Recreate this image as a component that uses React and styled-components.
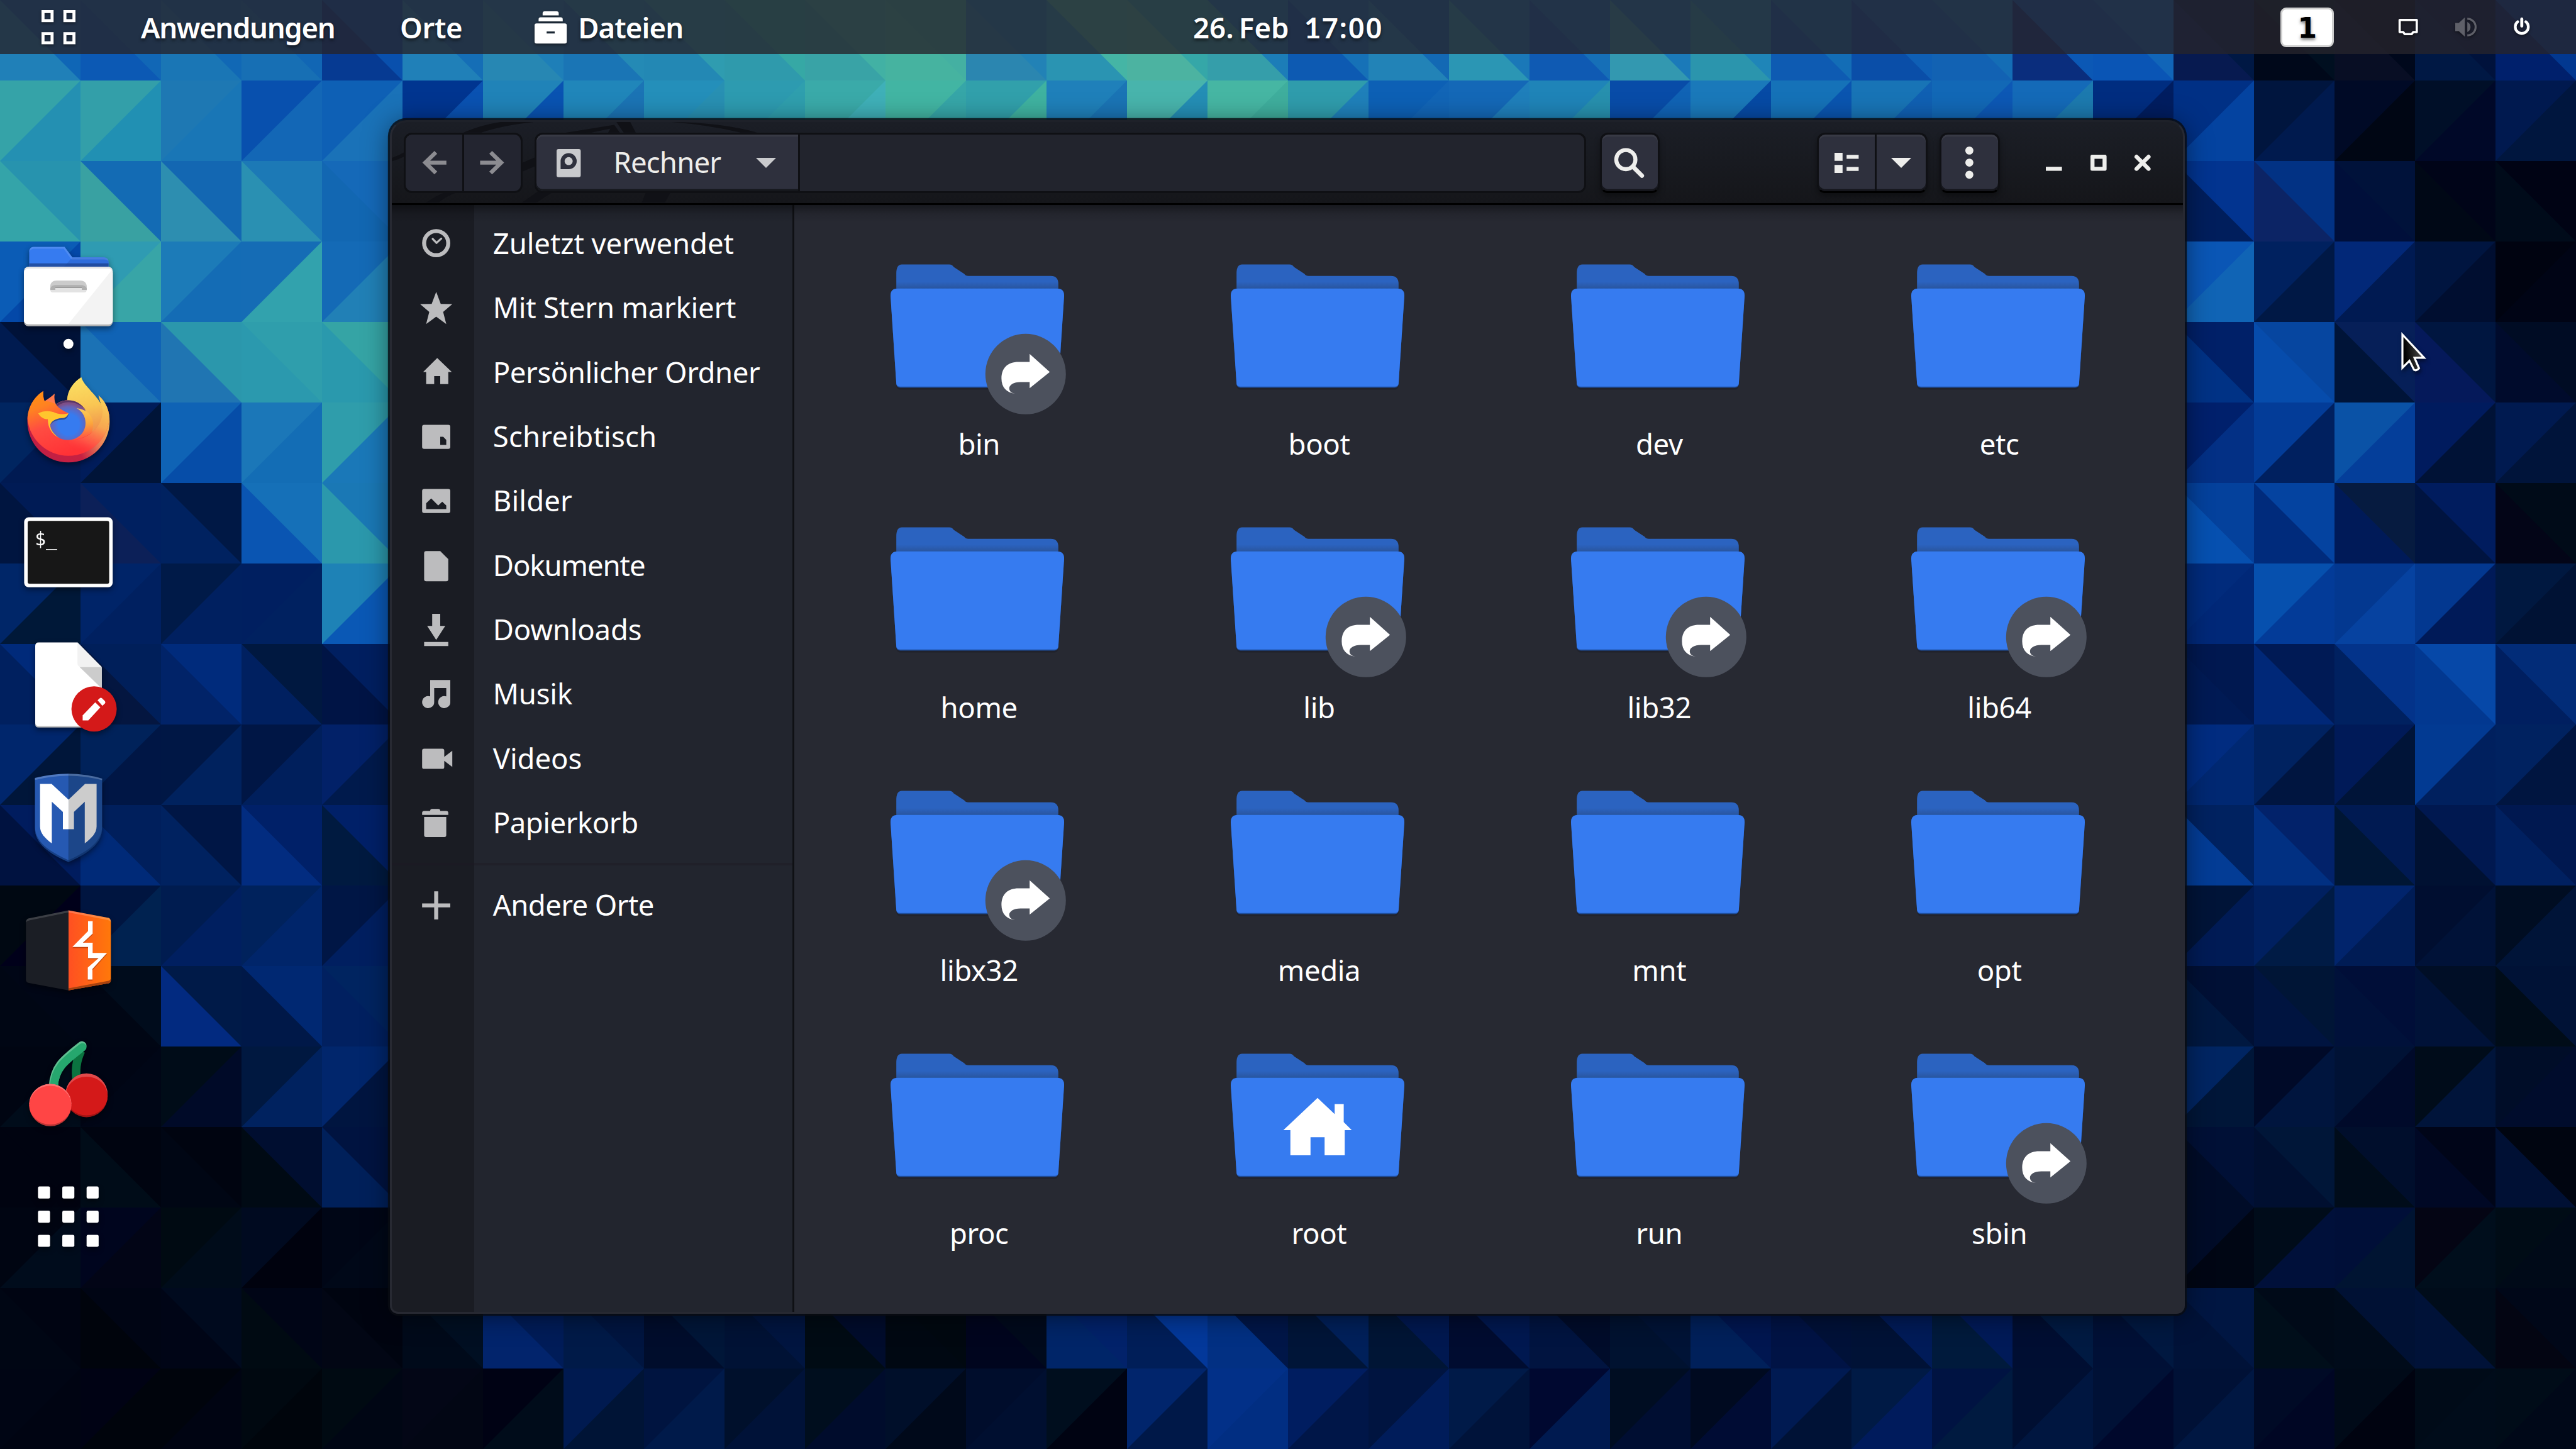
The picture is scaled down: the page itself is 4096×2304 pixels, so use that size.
import React from 'react';
import styled, { createGlobalStyle, css } from 'styled-components';

/* One design unit is 0.8 css pixels. */
const u = (n) => `${Math.round(n * 80) / 100}px`;

const Global = createGlobalStyle`
  html, body { margin: 0; padding: 0; background: #000612; }
  body { font-family: "Noto Sans", "Open Sans", sans-serif; overflow: hidden; }
  * { box-sizing: border-box; }
  svg { display: block; overflow: visible; flex: none; }
`;

/* ---------- wallpaper ---------- */

const ROWS = [
  '2080b8 0f66b6 0c59b4 1167b6 1a76b5 1168b5 176fb4 1166b4 063a92 0950ad 2080b8 156eb6 2787b3 1e7fb8 1a75b5 248ab5 2388b4 2f9cb0 2f9aac 36a8a5 39a3a6 42b1a4 46b3a0 44b0a2 2b86b0 2282b6 2a94b2 45b5a5 4cb3a1 35a7a8 359eaa 1c7db8 0d5ab2 1671b7 2283b7 1369b4 2b96b4 1a78b8 0f5ab3 166fb7 3398b0 1b7ab9 2b95ad 1f85b8 0e5bb2 136db6 0a4ea8 0f5fb5 1262b3 146db5 0a2d7d 0b58b5 0a55b5 1165b8 071a50 001844 00081a 000f20 080e24 00081c 001844 00123c 00206c 023890',
  '35a3a8 2490b2 339fa9 2190b3 1e78b3 1976b6 0850ae 1367b6 0e60b5 1a72b8 003590 0a52b2 2083b8 0953b2 2086ba 1b74b5 248fba 2890b3 2d9bb0 2f9fae 3aaaa9 3fb0b8 42b5a3 36a6a8 31a0ab 3fb2a0 1f80ba 1a74b5 48b4ac 248eb5 46b6a3 3fae9d 2f9cac 1f80ba 0d60b5 1265b6 1468b7 1f7fbb 1f84b8 2790ae 084ca8 1063b5 1a79ba 064aa5 1572b8 0a55b0 1874b6 1060b3 1268b6 0d58b5 146ab8 1c7aaf 002d80 001d60 003085 0443a0 00153e 001a4e 000a26 000614 000f28 000828 00194f 00163e',
  '34a4a9 2793ae 39a1a2 136bb4 2d8eb0 1367b2 2a90b2 1c79b6 1267b2 1569b8 | 001e5c 023490 0c2465 023284 000f3a 00123a 000816 000418 000b1a 000314',
  '0b5cb6 0448a8 2f9bb2 38a5a7 1c7bb8 146cb5 156cb5 32a2ad 146ab6 2180b6 | 0a56b5 1064b5 00215f 001845 022878 001a52 001540 000e30 000310 000415',
  '001b50 001238 1b72b5 1063b5 2075b2 2b97ac 2b99ae 2f9eac 2a99ad 35a4a5 | 003285 002068 064cac 0646a0 001438 061f58 05195a 001640 000b2c 000c24',
  '002560 001a52 001c5a 001438 0f63b5 064da8 1b77b8 136db5 2f9dab 1a78b8 | 00206c 033085 033c98 00205f 0a52a6 043e9a 001b5e 001236 001a50 00143a',
  '001540 001b55 0c2058 002060 002260 001845 0a55b2 1570b8 2b98ac 1a78b5 | 0650b0 04419c 002b7c 0443a0 001a58 061b40 001440 001c5e 030517 000b18',
  '002668 001838 002468 002060 001a48 002060 001f60 002160 1e82b6 0a58b5 | 012b7c 002878 0650ae 033b98 033890 0642a0 033890 001a58 001840 001234',
  '00205f 002a7a 041640 001f5a 012368 002b7c 002060 001840 001445 001f60 | 001a54 001850 002878 001a55 002160 03338a 023890 0648a8 001f60 022c78',
  '00266c 00163a 00225a 001645 001745 00225e 001645 001f5c 022168 001a4c | 012c80 002872 002260 001540 001a58 001438 023a92 00205e 002260 001540',
  '001240 001c5e 002a78 001f5c 002260 001645 022c80 002068 001a40 002068 | 033c95 002260 013082 02226a 001634 001a52 001132 001850 002060 001850',
  '000812 00001a 001540 002250 001c50 001f60 00225c 00256a 001645 001f60 | 001438 001b55 002060 001b45 01246c 001c55 000e30 001238 000d22 001438',
  '000614 000616 000614 000c1c 022a80 001a48 001848 002872 012060 002460 | 001840 001035 001440 001536 00113a 000e38 001238 000e26 000c18 001236',
  '000512 000c1a 000514 000616 000c18 000a28 001840 00225f 01266c 001540 | 002562 001638 000a28 00153e 001235 000a2a 000c1a 00143a 000d28 000c2c',
  '000310 000310 000c18 000410 000614 000410 000a14 000e30 00205a 001340 | 000c28 001036 000f30 001638 000c1a 000e2c 000825 000518 001034 000510',
  '000512 000c1c 00051e 020516 000a12 000c1a 000a20 00020e 000616 000818 | 000c28 000614 000c1a 00103a 000f38 001432 040514 000e1c 000c16 000a18',
  '000614 000412 00040c 000514 000516 000a1e 000a12 000516 020614 000410 000a1a 000f22 02246c 001c58 001a48 001540 000d2c 001638 001235 001540 000b14 000c2c 000812 000810 00051e 000a1c 002568 02226a 001e58 03389a 023083 001648 001538 00205a 001535 001850 000c30 001850 011440 000c2a 001230 001336 00205a 001650 001345 001138 001236 001b58 001a3c 001a58 000e32 001a42 001036 001840 001238 001642 000e1a 000a18 000b1a 001134 001238 000c1a 030512 000718',
  '000514 000412 000214 00040c 00040c 000412 000810 00050c 000a12 000614 030616 020614 000214 000c1a 001a50 001436 001440 001a4a 00102c 001238 000e1e 000c2c 000f2a 00091a 000d2c 000f30 000e1e 000312 01256c 001848 023088 012e82 001d60 001648 001440 001c5a 001a48 00133a 000830 001a50 000d22 000e32 000a20 000c34 001a52 001236 001a45 001b5c 001342 001a40 000f32 001640 001136 00082c 001136 001742 000a26 000624 000a18 000310 000b18 000c1a 000c18 000818',
];

const rowCells = (row) => {
  const [a, b] = row.split(' | ').map((s) => s.split(' '));
  const pair = (list, offset) =>
    list.reduce((out, c, i) => (i % 2 ? out : [...out, { col: offset + i / 2, l: c, r: list[i + 1] }]), []);
  return b ? [...pair(a, 0), ...pair(b, 27)] : pair(a, 0);
};

const WallpaperSvg = styled.svg`
  position: absolute;
  inset: 0;
  width: 4096px;
  height: 2304px;
`;

const Wallpaper = () => (
  <WallpaperSvg viewBox="0 0 32 18" preserveAspectRatio="none">
    {ROWS.map((row, y) =>
      rowCells(row).map(({ col: x, l, r }) => (
        <g key={`${x}-${y}`}>
          <rect x={x} y={y} width="1" height="1" fill={`#${r}`} shapeRendering="crispEdges" />
          <path
            d={y % 2 ? `M${x} ${y}h1L${x} ${y + 1}z` : `M${x} ${y}v1h1z`}
            fill={`#${l}`}
          />
        </g>
      ))
    )}
  </WallpaperSvg>
);

/* ---------- shell ---------- */

const Desktop = styled.div`
  position: relative;
  width: 4096px;
  height: 2304px;
  overflow: hidden;
  display: flex;
  flex-direction: column;
`;

const TopBar = styled.header`
  position: relative;
  flex: none;
  height: ${u(108)};
  display: grid;
  grid-template-columns: 1fr auto 1fr;
  align-items: center;
  background: rgba(37, 36, 44, 0.8);
  color: #fff;
  font-size: 45.5px;
  font-weight: 600;
  white-space: nowrap;
  text-shadow: 0 3px 5px rgba(0, 0, 0, 0.55);
`;

const BarMenus = styled.nav`
  display: grid;
  grid-template-columns: ${u(198)} ${u(515)} ${u(267)} ${u(87)} auto;
  align-items: center;
  justify-content: start;
  padding-left: ${u(82)};
`;

const BarLabel = styled.span`
  letter-spacing: ${(p) => p.$track || 0}px;
  word-spacing: ${(p) => p.$words || 0}px;
`;

const Clock = styled.div`
  display: flex;
  gap: 24px;
  align-items: baseline;
`;

const LatinOne = styled.span`
  font-family: Lato, sans-serif;
  font-weight: 700;
  font-size: 46px;
`;

const Status = styled.div`
  display: flex;
  justify-content: flex-end;
  align-items: center;
  padding-right: ${u(92)};
`;

const Workspace = styled.div`
  width: ${u(106)};
  height: ${u(79)};
  margin-right: ${u(129)};
  border: 3.2px solid #cfcfcf;
  border-radius: 9px;
  background: #fff;
  color: #000;
  display: flex;
  align-items: center;
  justify-content: center;
  padding-top: 3px;
  font: 700 44px/46px "DejaVu Sans", sans-serif;
`;

const Tray = styled.svg`
  width: ${(p) => u(p.$w)};
  height: ${u(40)};
  margin-right: ${(p) => u(p.$after || 0)};
  filter: drop-shadow(0 2px 2px rgba(0, 0, 0, 0.5));
`;

const BarIcon = styled.svg`
  width: ${(p) => u(p.$w)};
  height: ${(p) => u(p.$h)};
  filter: drop-shadow(0 2px 2px rgba(0, 0, 0, 0.45));
`;

const Dock = styled.aside`
  position: relative;
  width: ${u(272)};
  padding-top: ${u(330)};
  display: flex;
  flex-direction: column;
`;

const DockIcon = styled.svg`
  width: ${u(272)};
  height: ${u(264)};
  filter: drop-shadow(0 4px 5px rgba(0, 0, 0, 0.45));
`;

/* ---------- window ---------- */

const Window = styled.section`
  position: absolute;
  left: ${u(775)};
  top: ${u(239)};
  width: ${u(3568)};
  height: ${u(2372)};
  display: flex;
  flex-direction: column;
  border: 3.2px solid #272932;
  border-top-color: #1e2129;
  border-radius: 26px 26px 13px 13px;
  background: #272932;
  box-shadow: 0 0 0 3.2px rgba(9, 12, 18, 0.82), 0 4px 40px rgba(0, 0, 0, 0.5);
  overflow: hidden;
`;

const HeaderBar = styled.div`
  position: relative;
  flex: none;
  height: ${u(165)};
  display: flex;
  align-items: center;
  padding: ${u(1)} 0 0 ${u(24)};
  border-bottom: 3.2px solid #000;
  background: linear-gradient(#1b1e26, #15161a);
`;

const HeaderArt = styled.svg`
  position: absolute;
  left: 0;
  top: 0;
  width: 681px;
  height: 128px;
`;

const flatBox = css`
  border: 3.2px solid #0f1014;
  border-radius: 13px;
`;

const NavGroup = styled.div`
  position: relative;
  display: flex;
  width: ${u(236)};
  height: ${u(120)};
  margin-right: ${u(24)};
  background: #232530;
  overflow: hidden;
  ${flatBox}
`;

const NavButton = styled.button`
  flex: 1;
  border: 0;
  padding: 0;
  background: none;
  display: flex;
  align-items: center;
  justify-content: center;
  & + & { border-left: 3.2px solid #0f1014; }
`;

const PathBar = styled.div`
  position: relative;
  width: ${u(2090)};
  height: ${u(120)};
  margin-right: ${u(27)};
  display: flex;
  background: #22242d;
  overflow: hidden;
  ${flatBox}
`;

const PathButton = styled.button`
  width: ${u(524)};
  border: 0;
  border-right: 3.2px solid #0f1014;
  border-radius: 10px 0 0 10px;
  padding: 0 ${u(44)} 0 ${u(40)};
  background: #2e303d;
  box-shadow: inset 0 3.2px #383a45, inset 0 -3.2px #15171c;
  color: #eeeeec;
  font: 400 45.5px/1 "Noto Sans", sans-serif;
  letter-spacing: -0.8px;
  display: flex;
  align-items: center;
  justify-content: space-between;
`;

const PathText = styled.span`
  padding: 0 4px 2px 0;
`;

const RaisedGroup = styled.div`
  position: relative;
  display: flex;
  height: ${u(120)};
  width: ${(p) => u(p.$w)};
  margin-right: ${(p) => u(p.$after)};
  border: 3.2px solid #0f1014;
  border-bottom-color: #000;
  border-radius: 13px;
  background: #2e303d;
  box-shadow: inset 0 3.2px #383a45, inset 0 -3.2px #15161c, 0 5px 10px rgba(0, 0, 0, 0.35);
`;

const RaisedButton = styled.button`
  width: ${(p) => (p.$w ? u(p.$w) : '100%')};
  border: 0;
  padding: 0;
  background: none;
  display: flex;
  align-items: center;
  justify-content: center;
  & + & { border-left: 3.2px solid #0f1014; }
`;

const WindowButton = styled.button`
  position: relative;
  border: 0;
  padding: 0;
  margin-right: ${u(56)};
  background: none;
`;

const Glyph = styled.svg`
  width: ${(p) => u(p.$w || 64)};
  height: ${(p) => u(p.$h || p.$w || 64)};
  fill: ${(p) => p.$c || '#eeeeec'};
`;

const Body = styled.div`
  position: relative;
  flex: 1;
  display: flex;
  &::before {
    content: '';
    position: absolute;
    inset: 0 0 auto 0;
    height: 28px;
    background: linear-gradient(rgba(0, 0, 0, 0.4), rgba(0, 0, 0, 0.1) 50%, transparent);
  }
`;

const Sidebar = styled.nav`
  width: ${u(800)};
  flex: none;
  padding-top: ${u(12)};
  border-right: 3.2px solid #0f1014;
  background: linear-gradient(90deg, #1a1c23 ${u(164)}, #22252e ${u(164)});
`;

const Place = styled.div`
  height: ${u(128)};
  padding-left: ${u(56)};
  display: flex;
  align-items: center;
  gap: ${u(81)};
  color: #fff;
`;

const PlaceName = styled.span`
  font-size: 45.5px;
  line-height: 1;
  padding-bottom: 1px;
  letter-spacing: ${(p) => p.$track}px;
  white-space: nowrap;
`;

const Rule = styled.hr`
  height: 3.2px;
  border: 0;
  margin: ${u(16)} 0;
  background: rgba(30, 24, 34, 0.4);
`;

const FileGrid = styled.main`
  flex: 1;
  padding: ${u(110)} 0 0 ${u(26)};
  display: grid;
  grid-template-columns: repeat(4, ${u(676)});
  grid-auto-rows: ${u(522.7)};
`;

const FileItem = styled.div`
  display: flex;
  flex-direction: column;
  align-items: center;
  gap: ${u(14)};
  color: #fff;
`;

const FileName = styled.span`
  font-size: 45.5px;
  line-height: ${u(80)};
  padding-left: 5px;
  letter-spacing: -0.4px;
`;

const FolderSvg = styled.svg`
  width: ${u(360)};
  height: ${u(310)};
`;

const Cursor = styled.svg`
  position: absolute;
  left: ${u(4765)};
  top: ${u(650)};
  width: ${u(72)};
  height: ${u(104)};
  filter: drop-shadow(2px 4px 3px rgba(0, 0, 0, 0.5));
`;

/* ---------- icons ---------- */

const icons = {
  recent: (
    <g fill="none" stroke="#bcbcbe">
      <circle cx="32" cy="32" r="24" strokeWidth="8" />
      <path d="M25 23.5L32.5 31.5L42 23" strokeWidth="4" strokeLinecap="round" strokeLinejoin="round" />
    </g>
  ),
  star: <path d="M32 0L41 24L64 24.5L45.8 40L52 64L32 49.5L12 64L18.2 40L0 24.5L23 24z" />,
  home: <path d="M34 4L63 32H56V56H40V40H28V56H12V32H6z" />,
  desktop: <path fillRule="evenodd" d="M8 8H56a4 4 0 0 1 4 4V52a4 4 0 0 1-4 4H8a4 4 0 0 1-4-4V12a4 4 0 0 1 4-4zM40 32V48H52V38L46 32z" />,
  picture: <path fillRule="evenodd" d="M8 8H56a4 4 0 0 1 4 4V52a4 4 0 0 1-4 4H8a4 4 0 0 1-4-4V12a4 4 0 0 1 4-4zM12 48H52V41L44 33.5L36 41L22 27L12 36.5z" />,
  doc: <path d="M12 4H40L56 20V60a4 4 0 0 1-4 4H12a4 4 0 0 1-4-4V8a4 4 0 0 1 4-4z" />,
  download: <path d="M24 0H40V24H50L32 52L14 24H24zM8 56H56V64H8z" />,
  music: <path d="M20 4H60V48a12 12 0 1 1-8-11.3V20H28V48a12 12 0 1 1-8-11.3z" />,
  video: <path d="M8 12H44a4 4 0 0 1 4 4V28L64 16V48L48 36V48a4 4 0 0 1-4 4H8a4 4 0 0 1-4-4V16a4 4 0 0 1 4-4z" />,
  trash: <path d="M24 4H36a4 4 0 0 1 4 4H52a4 4 0 0 1 4 4V16H4V12a4 4 0 0 1 4-4H20a4 4 0 0 1 4-4zM8 20H52V56a4 4 0 0 1-4 4H12a4 4 0 0 1-4-4z" />,
  plus: <path d="M28 4H36V28H60V36H36V60H28V36H4V28H28z" />,
};

const PLACES = [
  ['recent', 'Zuletzt verwendet', -0.1],
  ['star', 'Mit Stern markiert', -0.25],
  ['home', 'Persönlicher Ordner', -0.45],
  ['desktop', 'Schreibtisch', 0.2],
  ['picture', 'Bilder', 0.1],
  ['doc', 'Dokumente', -1.1],
  ['download', 'Downloads', -0.2],
  ['music', 'Musik', -0.2],
  ['video', 'Videos', -0.1],
  ['trash', 'Papierkorb', -0.5],
];

const FILES = [
  ['bin', 'link'], ['boot'], ['dev'], ['etc'],
  ['home'], ['lib', 'link'], ['lib32', 'link'], ['lib64', 'link'],
  ['libx32', 'link'], ['media'], ['mnt'], ['opt'],
  ['proc'], ['root', 'home'], ['run'], ['sbin', 'link'],
];

const Folder = ({ emblem }) => (
  <FolderSvg viewBox="0 0 360 310">
    <path d="M19 26Q19 8 30 8H124Q130 8 133 13L154 27Q157 31 162 31H326Q341 31 341 47V90H19z" fill="url(#folderBack)" />
    <path d="M19 246H341Q341 257 333 257H27Q19 257 19 246z" fill="#1e2029" opacity="0.7" />
    <path d="M22 56H338Q353 56 352.5 71L341 246Q340.500 253 333 253H27Q19.500 253 19 246L7.500 71Q7 56 22 56z" fill="#1f4f9e" />
    <path d="M22 56H338Q353 56 352.500 71L341 245Q340.500 251 333 251H27Q19.500 251 19 245L7.500 71Q7 56 22 56z" fill="#367bf0" />
    {emblem === 'link' && (
      <g>
        <circle cx="276" cy="226" r="80" fill="#4c515d" />
        <path d="M284 186L324 222L284 254V242H266C252 242 243 248 243.500 255C244 261 249 264 255 265C238 263 228 252 228 235C228 214 240 202 262 202H284z" fill="#fff" />
      </g>
    )}
    {emblem === 'home' && (
      <path d="M180 96L214 128V108H232V144L248 160H234V210H194V174H166V210H126V160H112z" fill="#fff" />
    )}
  </FolderSvg>
);

const DefsSvg = styled.svg`
  position: absolute;
  width: 0;
  height: 0;
`;

const Defs = () => (
  <DefsSvg>
    <defs>
      <linearGradient id="folderBack" x1="0" y1="0" x2="0" y2="1">
        <stop offset="0" stopColor="#2b63c0" />
        <stop offset="0.42" stopColor="#2b63c0" />
        <stop offset="0.6" stopColor="#29549c" />
      </linearGradient>
      <linearGradient id="burp" x1="0" x2="1">
        <stop offset="0" stopColor="#ff5022" />
        <stop offset="1" stopColor="#ff780a" />
      </linearGradient>
      <linearGradient id="foxBody" gradientUnits="userSpaceOnUse" x1="190" y1="930" x2="330" y2="1300">
        <stop offset="0" stopColor="#ff8f14" />
        <stop offset="0.2" stopColor="#ff8122" />
        <stop offset="0.5" stopColor="#ff4c42" />
        <stop offset="1" stopColor="#ff3236" />
      </linearGradient>
      <linearGradient id="foxRight" gradientUnits="userSpaceOnUse" x1="560" y1="980" x2="420" y2="1280">
        <stop offset="0" stopColor="#f9cf58" />
        <stop offset="0.45" stopColor="#f7a650" />
        <stop offset="0.8" stopColor="#ff5a48" stopOpacity="0.8" />
        <stop offset="1" stopColor="#ff4040" stopOpacity="0" />
      </linearGradient>
      <linearGradient id="foxTail" gradientUnits="userSpaceOnUse" x1="420" y1="840" x2="480" y2="1180">
        <stop offset="0" stopColor="#fae063" />
        <stop offset="0.5" stopColor="#f9c653" />
        <stop offset="1" stopColor="#ee8a4c" />
      </linearGradient>
      <linearGradient id="foxFlame" gradientUnits="userSpaceOnUse" x1="430" y1="1020" x2="440" y2="1210">
        <stop offset="0" stopColor="#fcd05a" />
        <stop offset="0.5" stopColor="#fba63c" />
        <stop offset="1" stopColor="#ff4f44" />
      </linearGradient>
      <radialGradient id="foxGlobe" gradientUnits="userSpaceOnUse" cx="350" cy="1120" r="125">
        <stop offset="0.5" stopColor="#367bf0" />
        <stop offset="0.85" stopColor="#6664b8" />
        <stop offset="1" stopColor="#7d4f88" />
      </radialGradient>
      <linearGradient id="foxBase" gradientUnits="userSpaceOnUse" x1="200" y1="1300" x2="590" y2="1100">
        <stop offset="0" stopColor="#c21f44" />
        <stop offset="0.45" stopColor="#c52142" />
        <stop offset="0.75" stopColor="#ec8058" />
        <stop offset="1" stopColor="#f8bd58" />
      </linearGradient>
      <linearGradient id="cursorFill" x1="0" y1="0.5" x2="1" y2="0.3">
        <stop offset="0.1" stopColor="#000" />
        <stop offset="1" stopColor="#555" />
      </linearGradient>
      <clipPath id="foxClip">
        <circle cx="348" cy="1060" r="246" />
      </clipPath>
    </defs>
  </DefsSvg>
);

const FOX_BODY =
  'M527 946C572 982 594 1042 594 1100C594 1236 484 1346 348 1346C212 1346 103 1236 103 1100C103 1020 140 958 198 920C197 945 199 965 206 981C226 970 246 955 265 937C261 960 264 982 273 1000C295 982 320 975 348 975L545 1012C543 990 537 968 527 946z';

const FilesIcon = () => (
  <DockIcon viewBox="0 0 272 264">
    <g transform="translate(20 32) scale(.33333)">
      <path d="M114 190V90Q116 64 140 63H325L372 126H560Q586 128 587 155V190z" fill="#367bf0" />
      <path d="M372 126H560Q586 128 587 155V190H314z" fill="#2f6ddb" />
      <path d="M114 90Q116 64 140 63H325L372 126H560Q586 128 587 150Q578 138 560 138H366L320 75H140Q120 78 114 95z" fill="#fff" opacity=".12" />
      <path d="M114 162H587V190H114z" fill="#1d418c" opacity=".75" />
      <rect x="83" y="182" width="529" height="355" rx="26" fill="#b3b3b3" />
      <rect x="83" y="182" width="529" height="343" rx="26" fill="#e8e8e8" />
      <rect x="83" y="194" width="529" height="331" rx="24" fill="#fff" />
      <path d="M606 203Q612 210 612 220V500Q612 525 586 525H347z" fill="#f3f3f3" />
      <path d="M240 320V300Q242 266 276 265H420Q454 266 457 300V320Q457 335 440 335H256Q240 335 240 320z" fill="#e3e3e3" />
      <path d="M240 320V296Q244 265 276 265H420Q452 265 457 296V320H428V308H270V320z" fill="#cbcbcb" />
      <path d="M240 320V310Q248 291 276 291H420Q448 291 457 310V320H428V304H270V320z" fill="#b0b0b0" />
      <path d="M270 303H428V309H270z" fill="#989898" />
    </g>
    <circle cx="136" cy="246" r="10" fill="#fff" />
  </DockIcon>
);

const FirefoxIcon = () => (
  <DockIcon viewBox="0 0 272 264">
    <g transform="translate(20 -232) scale(.33333)">
      <path d={FOX_BODY} fill="url(#foxBase)" />
      <g clipPath="url(#foxClip)">
        <path d={FOX_BODY} fill="url(#foxBody)" />
        <path d="M527 946C572 982 594 1042 594 1100C594 1236 484 1346 348 1346L350 1213C410 1213 460 1195 490 1166C540 1120 556 1060 545 1012z" fill="url(#foxRight)" />
      </g>
      <path d="M340 975C342 915 380 865 425 838C437 884 505 935 538 990C552 1016 552 1040 550 1060C545 1105 520 1140 488 1168L400 1100z" fill="url(#foxTail)" />
      <ellipse cx="346" cy="1094" rx="118" ry="119" fill="url(#foxGlobe)" />
      <path d="M273 1000C295 982 320 975 348 975C390 976 425 995 453 1035C420 1000 385 987 348 987C322 988 300 995 283 1010z" fill="#5b3566" />
      <path d="M397 1022C450 1028 495 1062 495 1115C495 1135 492 1155 488 1168C455 1195 400 1213 348 1213C410 1208 450 1165 450 1110C450 1072 430 1040 397 1022z" fill="url(#foxFlame)" />
      <path d="M206 981L273 1000C292 1028 322 1040 348 1052C345 1068 332 1078 320 1081C280 1082 245 1092 239 1124C240 1155 262 1185 292 1200L180 1150L160 1020z" fill="url(#foxBody)" />
      <path d="M206 981C226 970 246 955 265 937C261 960 264 982 273 1000C250 985 230 980 206 981z" fill="#ff7a4e" />
      <path d="M320 1081C332 1078 345 1068 348 1052C350 1072 335 1088 318 1091C280 1092 255 1100 239 1124C245 1092 280 1082 320 1081z" fill="#2b4f96" />
      <path d="M168 1053C200 1036 240 1036 270 1050C300 1061 330 1059 348 1052C342 1070 330 1080 315 1080C280 1081 248 1094 239 1122C240 1150 262 1180 292 1200C250 1178 225 1140 225 1088C200 1088 180 1075 168 1053z" fill="#ffc62e" />
    </g>
  </DockIcon>
);

const TerminalIcon = () => (
  <DockIcon viewBox="0 0 272 264">
    <rect x="48" y="62" width="176" height="139" rx="9" fill="#fff" />
    <rect x="55" y="69" width="162" height="125" rx="4" fill="#171717" />
    <text x="69" y="118" fill="#fff" fontFamily="DejaVu Sans Mono, monospace" fontSize="37">$_</text>
  </DockIcon>
);

const EditorIcon = () => (
  <DockIcon viewBox="0 0 272 264">
    <path d="M77 50H154L202 98V209Q202 216 195 216H77Q70 216 70 209V57Q70 50 77 50z" fill="#bdbdbd" />
    <path d="M77 47H154L202 95.500V206Q202 213 195 213H77Q70 213 70 206V54Q70 47 77 47z" fill="#fff" />
    <path d="M158 95.500H202V138z" fill="#ccc" />
    <path d="M154 47L202 95.500H161Q154 95 154 88z" fill="#f2f2f2" />
    <circle cx="187" cy="179" r="45" fill="#d41919" />
    <path d="M164.300 192L189.300 166L199.500 176L175.500 202H164.300z" fill="#fff" />
    <path d="M193.900 162L198 158Q200.500 156 203 158L208.500 163.500Q210.500 166 208.500 168L203.600 172.700z" fill="#fff" />
  </DockIcon>
);

const MetasploitIcon = () => (
  <DockIcon viewBox="0 0 272 264">
    <path d="M69.400 52.600Q102 44 136.200 44V219.800C100 203 69.400 185 69.400 151.800z" fill="#2659b2" />
    <path d="M203 53.600Q170 44 136.200 44V219.800C172 203 203 185 203 151.800z" fill="#1c4689" />
    <path d="M69.400 52.600Q102 44 136.200 44T203 53.600V57Q170 48 136.200 48T69.400 56.500z" fill="#fff" opacity=".2" />
    <path d="M69.400 151.800C69.400 185 100 203 136.200 219.800C172 203 203 185 203 151.800V148C203 181 172 199 136.200 216C100 199 69.400 181 69.400 148z" fill="#0a2a5e" opacity=".55" />
    <path d="M79.600 64.300H102.600L136.200 95.500V154.300H125V120L103 99.800V182.500C89 172 79.600 162 79.600 149z" fill="#fff" />
    <path d="M192 64.300H169L136.200 95.500V154.300H147V120L168.500 99.800V182.500C182 172 192 162 192 149z" fill="#ccc" />
  </DockIcon>
);

const BurpIcon = () => (
  <DockIcon viewBox="0 0 272 264">
    <path d="M136.200 52L56 68Q51.500 70 51.500 76V190Q51.500 194 56 196L136.200 211z" fill="#1b1e25" />
    <path d="M136.200 52L56 68Q51.500 70 51.500 76Q53 73 58 72L136.200 56z" fill="#fff" opacity=".15" />
    <path d="M136.200 52L216 67Q220.400 69 220.400 75V190Q220.400 195 216 197L136.200 211z" fill="url(#burp)" />
    <path d="M136.200 207L216 192Q220.400 190 220.400 186V191Q220.400 195 216 197L136.200 211z" fill="#a8420f" />
    <path d="M136.200 52L216 67Q220.400 69 220.400 75Q218 72 214 71L136.200 56z" fill="#fff" opacity=".2" />
    <path d="M175 75.500H184.200V100L164.800 118.500H184.200V139H212.800L183.700 171V191.500H174.500V168L196 149H175V127H143.900L175 95z" fill="#9c3208" opacity=".6" />
    <path d="M175 73.400H184.200V98L164.800 116.300H184.200V136.500H212.800L183.700 168.500V189.500H174.500V165.500L196 147H175V124.700H143.900L175 93z" fill="#fff" />
  </DockIcon>
);

const CherryIcon = () => (
  <DockIcon viewBox="0 0 272 264">
    <path d="M161 66Q147 95 153 128" fill="none" stroke="#0b7440" strokeWidth="17" />
    <path d="M106 138C108 100 124 86 163 56" fill="none" stroke="#5fbf91" strokeWidth="18" strokeLinecap="round" />
    <path d="M107 138C109 102 126 88 164 59" fill="none" stroke="#26a76e" strokeWidth="16" strokeLinecap="round" />
    <circle cx="172" cy="156" r="42" fill="#a01414" />
    <path d="M130 153a42 42 0 0 1 84 0z" fill="#e2494a" />
    <ellipse cx="172" cy="156" rx="42" ry="38.500" fill="#d41919" />
    <circle cx="100" cy="174" r="42" fill="#b93535" />
    <path d="M58 172a42 40 0 0 1 84 0z" fill="#ff7070" />
    <ellipse cx="100" cy="174" rx="42" ry="38.500" fill="#ff4545" />
  </DockIcon>
);

const AppsIcon = () => (
  <DockIcon viewBox="0 0 272 264" fill="#fff">
    {[0, 1, 2].map((r) =>
      [0, 1, 2].map((c) => <rect key={`${r}${c}`} x={75.5 + 48.3 * c} y={72 + 48 * r} width="24" height="24" rx="3" />)
    )}
  </DockIcon>
);

/* ---------- page ---------- */

export default function App() {
  return (
    <Desktop>
      <Global />
      <Defs />
      <Wallpaper />
      <TopBar>
        <BarMenus>
          <BarIcon $w={70} $h={68} viewBox="0 0 70 68" fill="none" stroke="#fff" strokeWidth="6">
            <rect x="3" y="3" width="18" height="18" />
            <rect x="46.500" y="3" width="18" height="18" />
            <rect x="3" y="47" width="18" height="18" />
            <rect x="46.500" y="47" width="18" height="18" />
          </BarIcon>
          <BarLabel $track={-1.4}>Anwendungen</BarLabel>
          <BarLabel $track={-0.3}>Orte</BarLabel>
          <BarIcon $w={64} $h={64} viewBox="0 0 64 64" fill="#fff">
            <path d="M20 0H44a4 4 0 0 1 4 4V8H16V4a4 4 0 0 1 4-4zM12 12H52a4 4 0 0 1 4 4V20H8V16a4 4 0 0 1 4-4z" />
            <path fillRule="evenodd" d="M4 24H60a4 4 0 0 1 4 4V60a4 4 0 0 1-4 4H4a4 4 0 0 1-4-4V28a4 4 0 0 1 4-4zM24 40V44H40V40z" />
          </BarIcon>
          <BarLabel $track={-0.9}>Dateien</BarLabel>
        </BarMenus>
        <Clock>
          <BarLabel $track={0.1} $words={-4}>26. Feb</BarLabel>
          <BarLabel $track={1.6}><LatinOne>1</LatinOne>7:00</BarLabel>
        </Clock>
        <Status>
          <Workspace>1</Workspace>
          <Tray $w={38} $after={74} viewBox="0 0 38 40">
            <path d="M2 6H36V30H29L26 34H12L9 30H2z" fill="none" stroke="#fff" strokeWidth="4.500" strokeLinejoin="round" />
          </Tray>
          <Tray $w={40} $after={76} viewBox="0 0 40 40">
            <path d="M0 12H7L19 1V39L7 28H0z" fill="#5f6069" />
            <path d="M24 10a11 11 0 0 1 0 20z" fill="#5f6069" />
            <path d="M24 3.500a16.500 16.500 0 0 1 0 33" fill="none" stroke="#5f6069" strokeWidth="4" />
          </Tray>
          <Tray $w={32} viewBox="0 0 32 40" fill="none" stroke="#fff" strokeLinecap="round">
            <path d="M8 9.500A13 13 0 1 0 24 9.500" strokeWidth="5.500" />
            <path d="M16 4V18" strokeWidth="6" />
          </Tray>
        </Status>
      </TopBar>

      <Dock>
        <FilesIcon />
        <FirefoxIcon />
        <TerminalIcon />
        <EditorIcon />
        <MetasploitIcon />
        <BurpIcon />
        <CherryIcon />
        <AppsIcon />
      </Dock>

      <Window>
        <HeaderBar>
          <HeaderArt viewBox="16 42 1552 292" fill="#101116">
            <path d="M16 172Q42 163 64 150V166Q40 178 16 184z" />
            <path d="M275 80Q340 52 410 42L530 42Q420 54 340 80z" />
            <path d="M640 82L822 52L842 80H800L808 66L740 80z" />
            <path d="M830 42H880L900 80H856z" />
            <path d="M1030 42Q1210 44 1340 80H1280Q1160 52 1030 42z" />
            <path d="M140 334Q175 310 215 294H258Q210 312 185 334z" />
            <path d="M488 334L545 294H602L540 334z" />
            <path d="M922 334L938 294H1028L1006 334z" />
            <path d="M488 190L540 168V200L488 222z" />
          </HeaderArt>
          <NavGroup>
            <NavButton>
              <Glyph $w={64} viewBox="0 0 64 64" $c="none" stroke="#8c8c91" strokeWidth="8">
                <path d="M35 11.500L14 32L35 52.500M16 32H56" />
              </Glyph>
            </NavButton>
            <NavButton>
              <Glyph $w={64} viewBox="0 0 64 64" $c="none" stroke="#8c8c91" strokeWidth="8">
                <path d="M29 11.500L50 32L29 52.500M48 32H8" />
              </Glyph>
            </NavButton>
          </NavGroup>
          <PathBar>
            <PathButton>
              <Glyph $w={48} $h={56} viewBox="0 0 48 56" $c="#c9cacd">
                <path fillRule="evenodd" d="M4 0H44a4 4 0 0 1 4 4V52a4 4 0 0 1-4 4H4a4 4 0 0 1-4-4V4a4 4 0 0 1 4-4zM8 40H24A16 16 0 1 0 8 24z" />
                <circle cx="24" cy="24" r="8" />
              </Glyph>
              <PathText>Rechner</PathText>
              <Glyph $w={40} $h={20} viewBox="0 0 40 20" $c="#c9cacd"><path d="M0 0H40L20 20z" /></Glyph>
            </PathButton>
          </PathBar>
          <RaisedGroup $w={119} $after={312}>
            <RaisedButton>
              <Glyph $w={64} viewBox="0 0 64 64" $c="none" stroke="#eeeeec" strokeWidth="8">
                <circle cx="24" cy="26" r="19" />
                <path d="M38 40L56 58" strokeLinecap="round" strokeWidth="8.500" />
              </Glyph>
            </RaisedButton>
          </RaisedGroup>
          <RaisedGroup $w={220} $after={24}>
            <RaisedButton $w={112}>
              <Glyph $w={48} $h={40} viewBox="0 0 48 40">
                <path d="M0 0H16V16H0zM24 4H48V12H24zM0 24H16V40H0zM24 28H48V36H24z" />
              </Glyph>
            </RaisedButton>
            <RaisedButton $w={100}>
              <Glyph $w={40} $h={20} viewBox="0 0 40 20"><path d="M0 0H40L20 20z" /></Glyph>
            </RaisedButton>
          </RaisedGroup>
          <RaisedGroup $w={120} $after={92}>
            <RaisedButton>
              <Glyph $w={16} $h={64} viewBox="0 0 16 64">
                <circle cx="8" cy="8" r="8" /><circle cx="8" cy="32" r="8" /><circle cx="8" cy="56" r="8" />
              </Glyph>
            </RaisedButton>
          </RaisedGroup>
          <WindowButton>
            <Glyph $w={32} viewBox="0 0 32 32"><path d="M0 24H32V32H0z" /></Glyph>
          </WindowButton>
          <WindowButton>
            <Glyph $w={32} viewBox="0 0 32 32">
              <path fillRule="evenodd" d="M3 0H29a3 3 0 0 1 3 3V29a3 3 0 0 1-3 3H3a3 3 0 0 1-3-3V3a3 3 0 0 1 3-3zM8 8V24H24V8z" />
            </Glyph>
          </WindowButton>
          <WindowButton>
            <Glyph $w={32} viewBox="0 0 32 32" stroke="#eeeeec" strokeWidth="8" strokeLinecap="round">
              <path d="M4 4L28 28M28 4L4 28" />
            </Glyph>
          </WindowButton>
        </HeaderBar>

        <Body>
          <Sidebar>
            {PLACES.map(([icon, name, track]) => (
              <Place key={name}>
                <Glyph viewBox="0 0 64 64" $c="#bcbcbe">{icons[icon]}</Glyph>
                <PlaceName $track={track}>{name}</PlaceName>
              </Place>
            ))}
            <Rule />
            <Place>
              <Glyph viewBox="0 0 64 64" $c="#bcbcbe">{icons.plus}</Glyph>
              <PlaceName $track={-0.6}>Andere Orte</PlaceName>
            </Place>
          </Sidebar>
          <FileGrid>
            {FILES.map(([name, emblem]) => (
              <FileItem key={name}>
                <Folder emblem={emblem} />
                <FileName>{name}</FileName>
              </FileItem>
            ))}
          </FileGrid>
        </Body>
      </Window>

      <Cursor viewBox="4765 650 72 104">
        <path d="M4775 665V731L4789 717L4798 735Q4803 738 4808 732L4799 711H4818z" fill="url(#cursorFill)" stroke="#fff" strokeWidth="4" strokeLinejoin="miter" />
      </Cursor>
    </Desktop>
  );
}
